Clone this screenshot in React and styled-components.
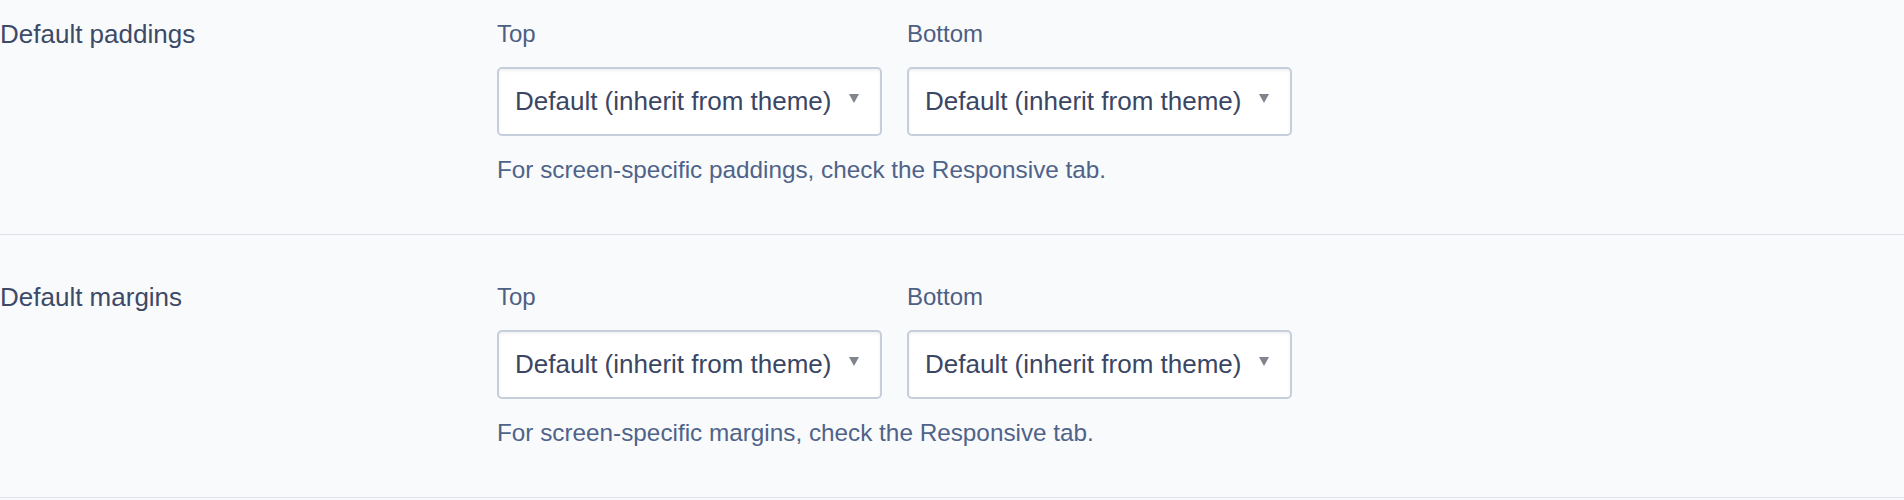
import styled, { createGlobalStyle } from "styled-components"

const GlobalStyle = createGlobalStyle`
  html, body {
    margin: 0;
    padding: 0;
    background: #f9fafc;
  }
  body {
    font-family: "Liberation Sans", Arial, sans-serif;
    -webkit-font-smoothing: antialiased;
  }
`

const Page = styled.div`
  width: 1904px;
  margin-top: -28px;
  background: #f9fafc;
`

const Section = styled.section`
  display: grid;
  grid-template-columns: 497px 1fr;
  padding: 44px 0 46px;
  border-bottom: 1px solid #dde2ea;
`

const Title = styled.div`
  font-size: 26px;
  line-height: 36px;
  color: #3c4a67;
`

const Fields = styled.div`
  display: flex;
  flex-direction: column;
`

const Row = styled.div`
  display: flex;
  gap: 25px;
`

const Field = styled.div`
  display: flex;
  flex-direction: column;
  gap: 15px;
`

const Label = styled.label`
  font-size: 24px;
  line-height: 36px;
  color: #4d5f82;
`

const Select = styled.div`
  position: relative;
  box-sizing: border-box;
  width: 385px;
  height: 69px;
  padding: 0 16px;
  display: flex;
  align-items: center;
  background: #fff;
  border: 2px solid #c6cedb;
  border-radius: 5px;
  box-shadow: inset 0 2px 3px rgba(30, 40, 60, 0.06);
  font-size: 26px;
  color: #3a4664;
  &::after {
    content: "";
    position: absolute;
    right: 21px;
    top: 25px;
    border-left: 5px solid transparent;
    border-right: 5px solid transparent;
    border-top: 9px solid #7f848d;
  }
`

const Help = styled.p`
  margin: 16px 0 0;
  font-size: 24.3px;
  line-height: 36px;
  color: #4f6389;
`

const sections = [
  { title: "Default paddings", help: "For screen-specific paddings, check the Responsive tab." },
  { title: "Default margins", help: "For screen-specific margins, check the Responsive tab." },
]

export default function App() {
  return (
    <>
      <GlobalStyle />
      <Page>
        {sections.map((s) => (
          <Section key={s.title}>
            <Title>{s.title}</Title>
            <Fields>
              <Row>
                {["Top", "Bottom"].map((side) => (
                  <Field key={side}>
                    <Label>{side}</Label>
                    <Select>Default (inherit from theme)</Select>
                  </Field>
                ))}
              </Row>
              <Help>{s.help}</Help>
            </Fields>
          </Section>
        ))}
      </Page>
    </>
  )
}
